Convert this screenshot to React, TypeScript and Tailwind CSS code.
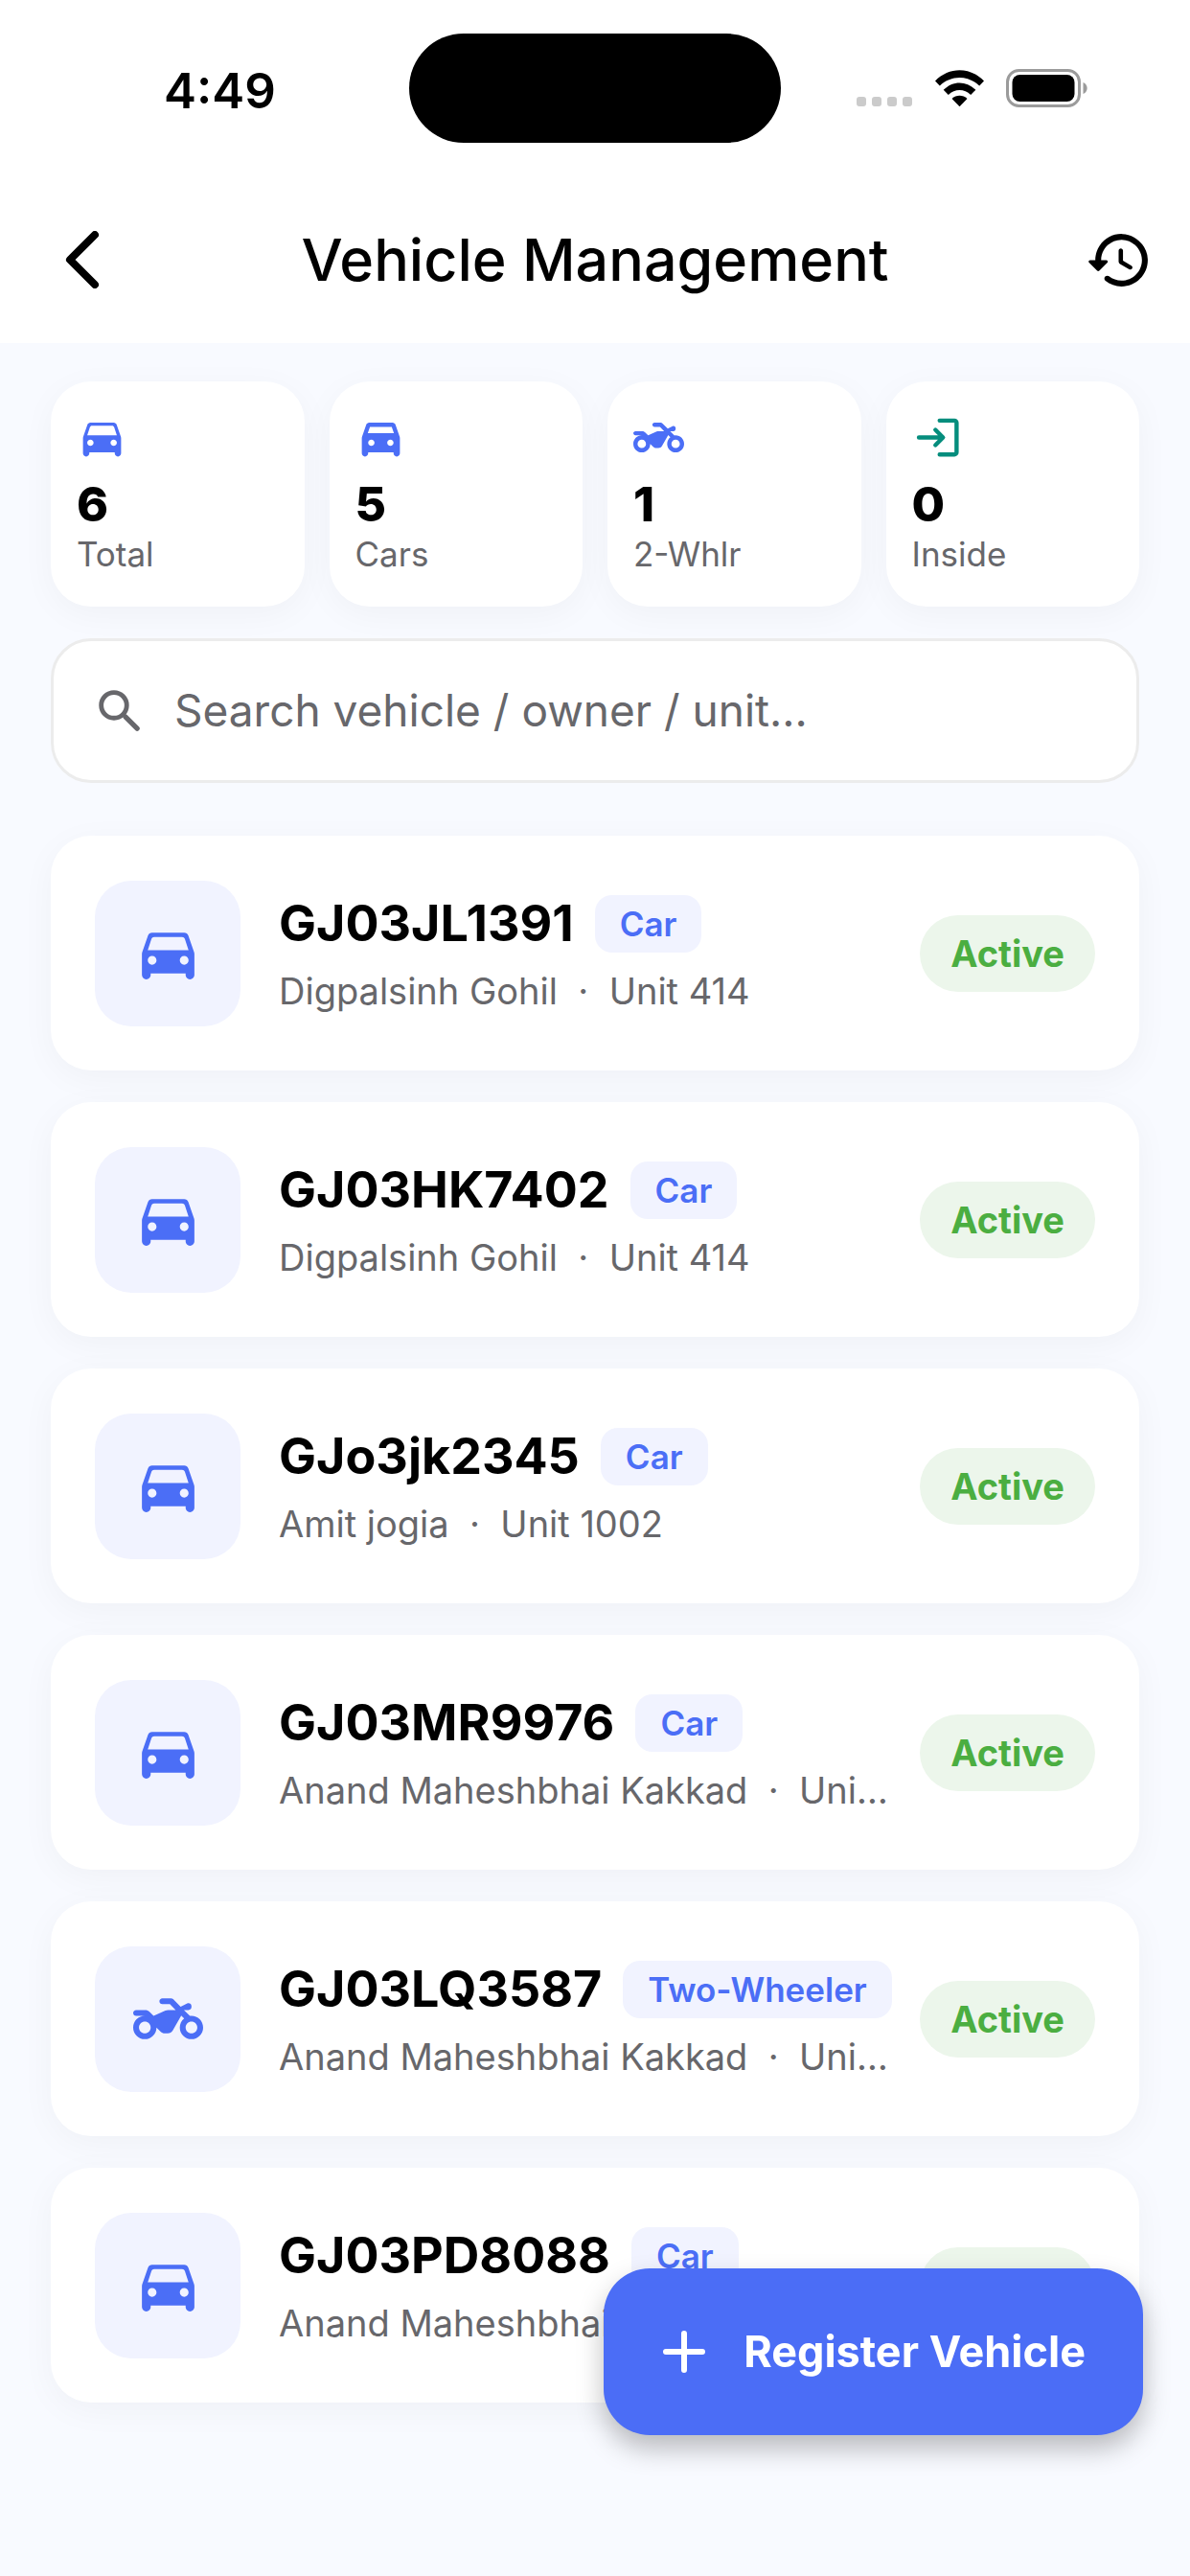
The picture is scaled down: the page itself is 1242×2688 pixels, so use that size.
import type { ReactNode } from "react";

type VehicleType = "Car" | "Two-Wheeler";

type Vehicle = {
  plate: string;
  type: VehicleType;
  owner: string;
  unit: string;
};

const vehicles: Vehicle[] = [
  { plate: "GJ03JL1391", type: "Car", owner: "Digpalsinh Gohil", unit: "414" },
  { plate: "GJ03HK7402", type: "Car", owner: "Digpalsinh Gohil", unit: "414" },
  { plate: "GJo3jk2345", type: "Car", owner: "Amit jogia", unit: "1002" },
  { plate: "GJ03MR9976", type: "Car", owner: "Anand Maheshbhai Kakkad", unit: "1002" },
  { plate: "GJ03LQ3587", type: "Two-Wheeler", owner: "Anand Maheshbhai Kakkad", unit: "1002" },
  { plate: "GJ03PD8088", type: "Car", owner: "Anand Maheshbhai Kakkad", unit: "1002" },
];

type IconProps = { className?: string };

function CarIcon({ className }: IconProps) {
  return (
    <svg viewBox="0 0 24 24" fill="currentColor" className={className} aria-hidden="true">
      <path d="M18.92 6.01C18.72 5.42 18.16 5 17.5 5h-11c-.66 0-1.21.42-1.42 1.01l-1.97 5.67c-.07.21-.11.43-.11.66v7.16c0 .83.67 1.5 1.5 1.5S6 20.33 6 19.5V19h12v.5c0 .82.67 1.5 1.5 1.5.82 0 1.5-.67 1.5-1.5v-7.16c0-.22-.04-.45-.11-.66l-1.97-5.67zM6.5 16c-.83 0-1.5-.67-1.5-1.5S5.67 13 6.5 13s1.5.67 1.5 1.5S7.33 16 6.5 16zm11 0c-.83 0-1.5-.67-1.5-1.5s.67-1.5 1.5-1.5 1.5.67 1.5 1.5-.67 1.5-1.5 1.5zM5 11l1.27-3.82c.14-.4.52-.68.95-.68h9.56c.43 0 .81.28.95.68L19 11H5z" />
    </svg>
  );
}

function CarFilledIcon({ className }: IconProps) {
  return (
    <svg viewBox="0 0 24 24" fill="currentColor" className={className} aria-hidden="true">
      <path d="M18.92 6.01C18.72 5.42 18.16 5 17.5 5h-11c-.66 0-1.21.42-1.42 1.01l-1.97 5.67c-.07.21-.11.43-.11.66v7.16c0 .83.67 1.5 1.5 1.5S6 20.33 6 19.5V19h12v.5c0 .82.67 1.5 1.5 1.5.82 0 1.5-.67 1.5-1.5v-7.16c0-.22-.04-.45-.11-.66l-1.97-5.67zM7.5 16c-.83 0-1.5-.67-1.5-1.5S6.67 13 7.5 13s1.5.67 1.5 1.5S8.33 16 7.5 16zm9 0c-.83 0-1.5-.67-1.5-1.5s.67-1.5 1.5-1.5 1.5.67 1.5 1.5-.67 1.5-1.5 1.5zM5.81 10l1.04-3h10.29l1.04 3H5.81z" />
    </svg>
  );
}

function BikeIcon({ className }: IconProps) {
  return (
    <svg viewBox="0 0 24 24" fill="currentColor" className={className} aria-hidden="true">
      <path d="M20 11c-.18 0-.36.03-.53.05L17.41 9H19c.55 0 1-.45 1-1v-.38c0-.74-.78-1.23-1.45-.89l-2.27 1.13-2.57-2.57c-.19-.18-.45-.29-.71-.29h-3c-.55 0-1 .45-1 1s.45 1 1 1h2.59l2 2h-2.65c-.31 0-.62.07-.89.21L7 11 5.59 9.59C5.21 9.21 4.7 9 4.17 9H1c-.55 0-1 .45-1 1s.45 1 1 1h3c-2.21 0-4 1.79-4 4s1.79 4 4 4 4-1.79 4-4l1.41 1.41c.38.38.89.59 1.42.59h1.01c.72 0 1.38-.38 1.74-1.01l2.91-5.09 1.01 1.01c-.91.73-1.5 1.84-1.5 3.09 0 2.21 1.79 4 4 4s4-1.79 4-4-1.79-4-4-4zM4 17c-1.1 0-2-.9-2-2s.9-2 2-2 2 .9 2 2-.9 2-2 2zm16 0c-1.1 0-2-.9-2-2s.9-2 2-2 2 .9 2 2-.9 2-2 2z" />
    </svg>
  );
}

function InsideIcon({ className }: IconProps) {
  return (
    <svg
      viewBox="0 0 24 24"
      fill="none"
      stroke="currentColor"
      strokeWidth="2"
      strokeLinecap="round"
      strokeLinejoin="round"
      className={className}
      aria-hidden="true"
    >
      <path d="M3.2 12h11M11 8.4l3.6 3.6-3.6 3.6M13 4h7a1 1 0 0 1 1 1v14a1 1 0 0 1-1 1h-7" />
    </svg>
  );
}

function StatusBar() {
  return (
    <div className="grid grid-cols-[1fr_388px_1fr] items-center pt-[35px] pb-[35px]">
      <div className="pt-1 pl-8 text-center text-[51px] leading-none font-semibold">4:49</div>
      <div className="h-[114px] rounded-full bg-black" />
      <div className="flex items-center justify-center pr-7">
        <div className="flex gap-[6px] pt-7">
          <span className="size-[10px] rounded-[3px] bg-[#cbcbcb]" />
          <span className="size-[10px] rounded-[3px] bg-[#cbcbcb]" />
          <span className="size-[10px] rounded-[3px] bg-[#cbcbcb]" />
          <span className="size-[10px] rounded-[3px] bg-[#cbcbcb]" />
        </div>
        <svg viewBox="0 0 51 38" className="ml-6 h-[38px] w-[51px]" aria-hidden="true">
          <path d="M0 11.5C14.5 -3.5 36.5 -3.5 51 11.5L46.2 16.5C34.5 5 16.5 5 4.8 16.5Z" />
          <path d="M8.7 20.8C18.5 11 32.5 11 42.3 20.8L37.2 26C30.5 19.3 20.5 19.3 13.8 26Z" />
          <path d="M17.5 30C22 25.6 29 25.6 33.5 30L25.5 38.2Z" />
        </svg>
        <svg viewBox="0 0 86 40" className="ml-[23px] h-10 w-[86px]" aria-hidden="true">
          <rect x="1.5" y="1.5" width="75" height="37" rx="12" fill="none" stroke="#9b9b9b" strokeWidth="3" />
          <rect x="6.5" y="6" width="65" height="28" rx="8" />
          <path d="M80.5 14c5.5 2 5.5 10 0 12z" fill="#9b9b9b" />
        </svg>
      </div>
    </div>
  );
}

function Header() {
  return (
    <header className="bg-white">
      <StatusBar />
      <div className="flex h-[174px] items-center justify-between px-[38px]">
        <button type="button" aria-label="Back" className="flex size-24 items-center justify-center">
          <svg
            viewBox="0 0 36 60"
            fill="none"
            stroke="currentColor"
            strokeWidth="8"
            strokeLinecap="round"
            strokeLinejoin="round"
            className="h-[60px] w-9"
          >
            <path d="M31 4L5 30l26 26" />
          </svg>
        </button>
        <h1 className="text-[61px] leading-none font-medium">Vehicle Management</h1>
        <button type="button" aria-label="History" className="flex h-24 w-24 items-center justify-end">
          <svg viewBox="0 0 24 24" fill="currentColor" className="size-[73px]">
            <path d="M13.26 3C8.17 2.86 4 6.95 4 12H2.21c-.45 0-.67.54-.35.85l2.79 2.8c.2.2.51.2.71 0l2.79-2.8c.31-.31.09-.85-.36-.85H6c0-3.9 3.18-7.05 7.1-7 3.72.05 6.85 3.18 6.9 6.9.05 3.91-3.1 7.1-7 7.1-1.61 0-3.1-.55-4.28-1.48-.4-.31-.96-.28-1.32.08-.42.42-.39 1.13.08 1.49C9.01 20.29 10.91 21 13 21c5.05 0 9.14-4.17 9-9.26C21.87 7.05 17.95 3.13 13.26 3zm-.51 5c-.41 0-.75.34-.75.75v3.68c0 .35.19.68.49.86l3.12 1.85c.36.21.82.09 1.03-.26.21-.36.09-.82-.26-1.03l-2.88-1.71v-3.4c0-.4-.34-.74-.75-.74z" />
          </svg>
        </button>
      </div>
    </header>
  );
}

function StatCard({ icon, value, label }: { icon: ReactNode; value: number; label: string }) {
  return (
    <div className="rounded-[42px] bg-white px-[27px] pt-8 pb-[30px] shadow-[0_8px_36px_rgba(0,0,0,0.04)]">
      {icon}
      <p className="mt-4 text-[50px] leading-[54px] font-extrabold">{value}</p>
      <p className="text-[35px] leading-[50px] text-[#67676b]">{label}</p>
    </div>
  );
}

function VehicleRow({ vehicle }: { vehicle: Vehicle }) {
  const Icon = vehicle.type === "Car" ? CarIcon : BikeIcon;
  return (
    <li className="flex h-[245px] items-center rounded-[42px] bg-white px-[46px] shadow-[0_8px_36px_rgba(0,0,0,0.04)]">
      <div className="flex size-[152px] shrink-0 items-center justify-center rounded-[38px] bg-[#f1f3ff] text-[#4b6ef6]">
        <Icon className="size-[73px]" />
      </div>
      <div className="ml-10 min-w-0 flex-1">
        <div className="flex items-center gap-[22px]">
          <span className="text-[52px] leading-[62px] font-bold">{vehicle.plate}</span>
          <span className="rounded-[18px] bg-[#f1f3ff] px-[26px] text-[35px] leading-[60px] font-semibold whitespace-nowrap text-[#4b6ef6]">
            {vehicle.type}
          </span>
        </div>
        <p className="mt-4 truncate text-[38px] leading-[46px] whitespace-pre text-[#67676b]">
          {`${vehicle.owner}  ·  Unit ${vehicle.unit}`}
        </p>
      </div>
      <span className="ml-[26px] shrink-0 rounded-full bg-[#ecf6eb] px-8 text-[38px] leading-[80px] font-bold text-[#4bae41]">
        Active
      </span>
    </li>
  );
}

export default function App() {
  return (
    <div className="min-h-screen bg-[#f8faff] font-['Inter',sans-serif] text-black">
      <Header />
      <main className="px-[53px] pt-10 pb-[180px]">
        <section className="grid grid-cols-4 gap-[26px]">
          <StatCard icon={<CarIcon className="size-[53px] text-[#4b6ef6]" />} value={6} label="Total" />
          <StatCard icon={<CarFilledIcon className="size-[53px] text-[#4b6ef6]" />} value={5} label="Cars" />
          <StatCard icon={<BikeIcon className="size-[53px] text-[#4b6ef6]" />} value={1} label="2-Whlr" />
          <StatCard icon={<InsideIcon className="size-[53px] text-[#058d7d]" />} value={0} label="Inside" />
        </section>

        <div className="mt-[33px] flex h-[151px] items-center rounded-[42px] border-3 border-[#ececec] bg-white px-10">
          <svg viewBox="0 0 24 24" fill="none" stroke="#67676b" strokeLinecap="round" className="size-[58px] shrink-0" aria-hidden="true">
            <circle cx="9.5" cy="9.5" r="5.5" strokeWidth="2" />
            <path d="M14.5 14.5l5 5" strokeWidth="2.2" />
          </svg>
          <input
            type="search"
            aria-label="Search vehicle, owner or unit"
            placeholder="Search vehicle / owner / unit…"
            className="ml-7 min-w-0 flex-1 bg-transparent text-[46px] outline-none placeholder:text-[#67676b]"
          />
        </div>

        <ul className="mt-[55px] flex flex-col gap-[33px]">
          {vehicles.map((vehicle) => (
            <VehicleRow key={vehicle.plate} vehicle={vehicle} />
          ))}
        </ul>
      </main>

      <button
        type="button"
        className="fixed right-[49px] bottom-[147px] flex h-[174px] items-center gap-[38px] rounded-[48px] bg-[#4b6df6] px-[60px] text-[45px] font-bold text-white shadow-[0_14px_28px_rgba(0,0,0,0.26)]"
      >
        <svg viewBox="0 0 48 48" stroke="currentColor" strokeWidth="6" strokeLinecap="round" className="size-12" aria-hidden="true">
          <path d="M24 5v38M5 24h38" />
        </svg>
        Register Vehicle
      </button>
    </div>
  );
}
